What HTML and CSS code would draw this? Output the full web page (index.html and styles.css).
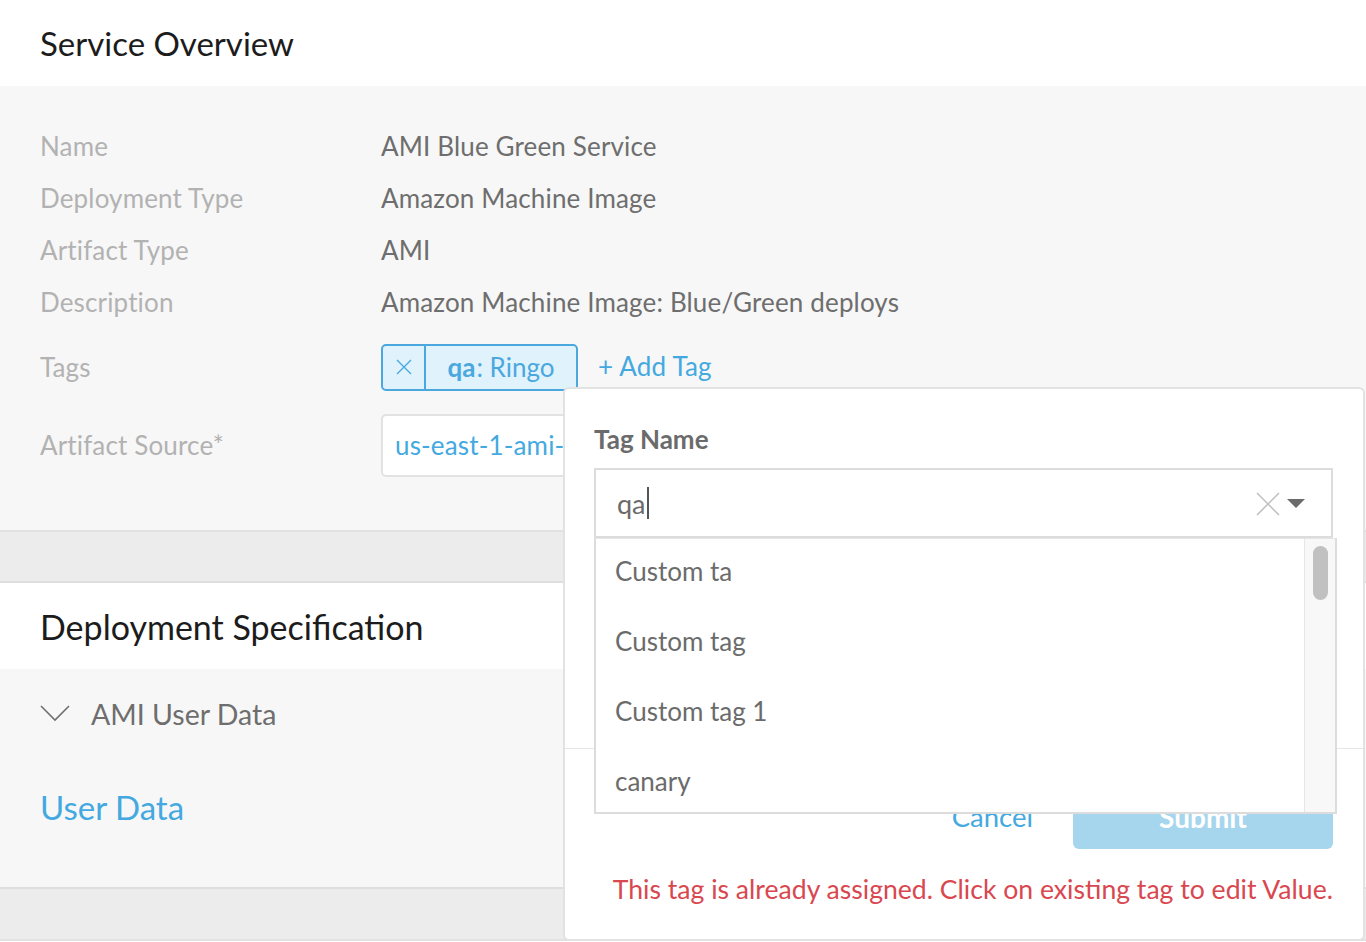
FILE: index.html
```html
<!DOCTYPE html>
<html lang="en">
<head>
<meta charset="utf-8">
<title>Service Overview</title>
<link rel="stylesheet" href="styles.css">
</head>
<body>
<div class="page">
  <header class="section-head">Service Overview</header>

  <section class="overview">
    <div class="row">
      <div class="label">Name</div>
      <div class="value">AMI Blue Green Service</div>
    </div>
    <div class="row">
      <div class="label">Deployment Type</div>
      <div class="value">Amazon Machine Image</div>
    </div>
    <div class="row">
      <div class="label">Artifact Type</div>
      <div class="value">AMI</div>
    </div>
    <div class="row">
      <div class="label">Description</div>
      <div class="value">Amazon Machine Image: Blue/Green deploys</div>
    </div>
    <div class="row row-tags">
      <div class="label">Tags</div>
      <div class="value tags">
        <span class="chip">
          <span class="chip-remove">
            <svg width="16" height="16" viewBox="0 0 16 16"><path d="M1 1 L15 15 M15 1 L1 15" stroke="#4aa8df" stroke-width="1.4" fill="none"/></svg>
          </span>
          <span class="chip-text"><b>qa</b>: Ringo</span>
        </span>
        <a class="add-tag">+ Add Tag</a>
      </div>
    </div>
    <div class="row row-source">
      <div class="label">Artifact Source*</div>
      <div class="value">
        <div class="source-input">us-east-1-ami-</div>
      </div>
    </div>
  </section>

  <div class="band"></div>

  <header class="section-head spec-head">Deployment Specification</header>

  <section class="spec">
    <div class="collapse">
      <svg class="chev" width="30" height="17" viewBox="0 0 30 17"><path d="M1 1 L15 15 L29 1" stroke="#707070" stroke-width="1.6" fill="none"/></svg>
      <span>AMI User Data</span>
    </div>
    <a class="user-data">User Data</a>
  </section>

  <div class="band band-bottom"></div>

  <div class="popup">
    <div class="popup-body">
      <div class="field-label">Tag Name</div>
      <div class="select">
        <span class="select-value">qa</span><span class="caret"></span>
        <span class="select-icons">
          <svg width="24" height="24" viewBox="0 0 24 24"><path d="M1 1 L23 23 M23 1 L1 23" stroke="#bfbfbf" stroke-width="1.5" fill="none"/></svg>
          <svg width="18" height="10" viewBox="0 0 18 10"><path d="M0 0 L18 0 L9 9 Z" fill="#6b6b6b"/></svg>
        </span>
      </div>
      <div class="menu">
        <ul class="menu-list">
          <li>Custom ta</li>
          <li>Custom tag</li>
          <li>Custom tag 1</li>
          <li>canary</li>
        </ul>
        <div class="scroll-track"><div class="scroll-thumb"></div></div>
      </div>
    </div>
    <div class="popup-foot">
      <div class="actions">
        <a class="cancel">Cancel</a>
        <button class="submit">Submit</button>
      </div>
      <div class="error">This tag is already assigned. Click on existing tag to edit Value.</div>
    </div>
  </div>
</div>
</body>
</html>
```

FILE: styles.css
```css
* { box-sizing: border-box; }

html, body {
  margin: 0;
  padding: 0;
  background: #ffffff;
}

body {
  font-family: Lato, "Open Sans", sans-serif;
  color: #6e6e6e;
  width: 1366px;
  height: 942px;
  overflow: hidden;
}

.page {
  position: relative;
  width: 1366px;
  height: 942px;
}

.section-head {
  height: 86px;
  display: flex;
  align-items: center;
  padding-left: 40px;
  font-size: 33px;
  font-weight: 400;
  color: #1c1c1c;
  background: #ffffff;
}

.spec-head {
  font-size: 34px;
  padding-top: 1px;
}

.overview {
  background: #f7f7f7;
  padding-top: 34px;
  height: 446px;
  border-bottom: 2px solid #e2e2e2;
}

.row {
  display: grid;
  grid-template-columns: 341px 1fr;
  align-items: center;
  height: 52px;
  padding-left: 40px;
  font-size: 26px;
  letter-spacing: 0.15px;
}

.label { color: #b2b2b2; }
.value { color: #6e6e6e; }

.row-tags { height: 78px; }

.row-source {
  height: 78px;
  align-items: start;
  padding-top: 8px;
}
.row-source .label { line-height: 63px; }

.tags {
  display: flex;
  align-items: center;
  gap: 20px;
  letter-spacing: 0;
}

.chip {
  display: inline-flex;
  height: 47px;
  border: 2px solid #4aa8df;
  border-radius: 5px;
  background: #e0f2fc;
  color: #4aa8df;
  overflow: hidden;
}

.chip-remove {
  width: 43px;
  display: flex;
  align-items: center;
  justify-content: center;
  border-right: 2px solid #4aa8df;
}

.chip-text {
  width: 150px;
  display: flex;
  align-items: center;
  justify-content: center;
  font-size: 26px;
}
.chip-text b { font-weight: 700; margin-right: 1px; }

.add-tag {
  color: #43a9e0;
  font-size: 26px;
  letter-spacing: 0.2px;
  margin-top: -3px;
}

.source-input {
  width: 560px;
  height: 63px;
  border: 2px solid #e2e2e2;
  border-radius: 5px;
  background: #ffffff;
  color: #43a9e0;
  padding-left: 12px;
  line-height: 59px;
  font-size: 26px;
  white-space: nowrap;
  overflow: hidden;
}

.band {
  height: 51px;
  background: #ececec;
  border-bottom: 2px solid #dedede;
}

.spec {
  background: #f7f7f7;
  height: 220px;
  border-bottom: 2px solid #dedede;
  padding: 28px 40px 0 40px;
}

.collapse {
  display: flex;
  align-items: center;
  height: 34px;
  font-size: 28.5px;
  color: #6e6e6e;
}
.collapse .chev { margin-right: 21px; margin-top: -2px; }

.user-data {
  display: block;
  margin-top: 55px;
  font-size: 33px;
  color: #43a9e0;
  line-height: 42px;
}

.band-bottom {
  height: 52px;
  border-bottom: 2px solid #e2e2e2;
}

/* Popup overlay */
.popup {
  position: absolute;
  left: 563px;
  top: 387px;
  width: 802px;
  height: 554px;
  border: 2px solid #e2e2e2;
  border-radius: 6px;
  background: #ffffff;
}

.popup-body {
  position: relative;
  height: 360px;
  padding: 36px 30px 0 29px;
  border-bottom: 1px solid #e6e6e6;
}

.field-label {
  font-size: 26px;
  font-weight: 700;
  color: #6b6b6b;
  line-height: 28px;
  margin-bottom: 15px;
}

.select {
  position: relative;
  width: 739px;
  height: 70px;
  border: 2px solid #dcdcdc;
  display: flex;
  align-items: center;
  padding-left: 21px;
  font-size: 27px;
  color: #6b6b6b;
}

.caret {
  display: inline-block;
  width: 2px;
  height: 32px;
  background: #555555;
  margin-left: 1px;
}

.select-icons {
  position: absolute;
  right: 26px;
  top: 22px;
  display: flex;
  align-items: flex-start;
  gap: 7px;
}
.select-icons svg:last-child { margin-top: 7px; }

.menu {
  position: absolute;
  z-index: 2;
  left: 29px;
  top: 149px;
  width: 743px;
  height: 276px;
  border: 2px solid #dcdcdc;
  border-top: 1px solid #e6e6e6;
  background: #ffffff;
}

.menu-list {
  list-style: none;
  margin: 0;
  padding: 0;
  margin-right: 31px;
}
.menu-list li {
  height: 70px;
  line-height: 64px;
  padding-left: 19px;
  font-size: 26px;
  color: #6b6b6b;
}

.scroll-track {
  position: absolute;
  top: 0;
  right: 0;
  bottom: 0;
  width: 31px;
  background: #f8f8f8;
  border-left: 1px solid #e6e6e6;
}
.scroll-thumb {
  position: absolute;
  left: 8px;
  top: 7px;
  width: 15px;
  height: 54px;
  border-radius: 8px;
  background: #c1c1c1;
}

.popup-foot {
  display: flex;
  flex-direction: column;
  align-items: flex-end;
  padding: 35px 30px 0 29px;
}

.actions {
  display: flex;
  align-items: center;
  gap: 40px;
}

.cancel {
  font-size: 27.5px;
  color: #43a9e0;
}

.submit {
  width: 260px;
  height: 65px;
  border: none;
  border-radius: 6px;
  background: #a6d5ee;
  color: #ffffff;
  font-family: Lato, "Open Sans", sans-serif;
  font-size: 28px;
  font-weight: 700;
}

.error {
  margin-top: 24px;
  font-size: 26.6px;
  line-height: 32px;
  color: #d9474f;
  white-space: nowrap;
}
```
